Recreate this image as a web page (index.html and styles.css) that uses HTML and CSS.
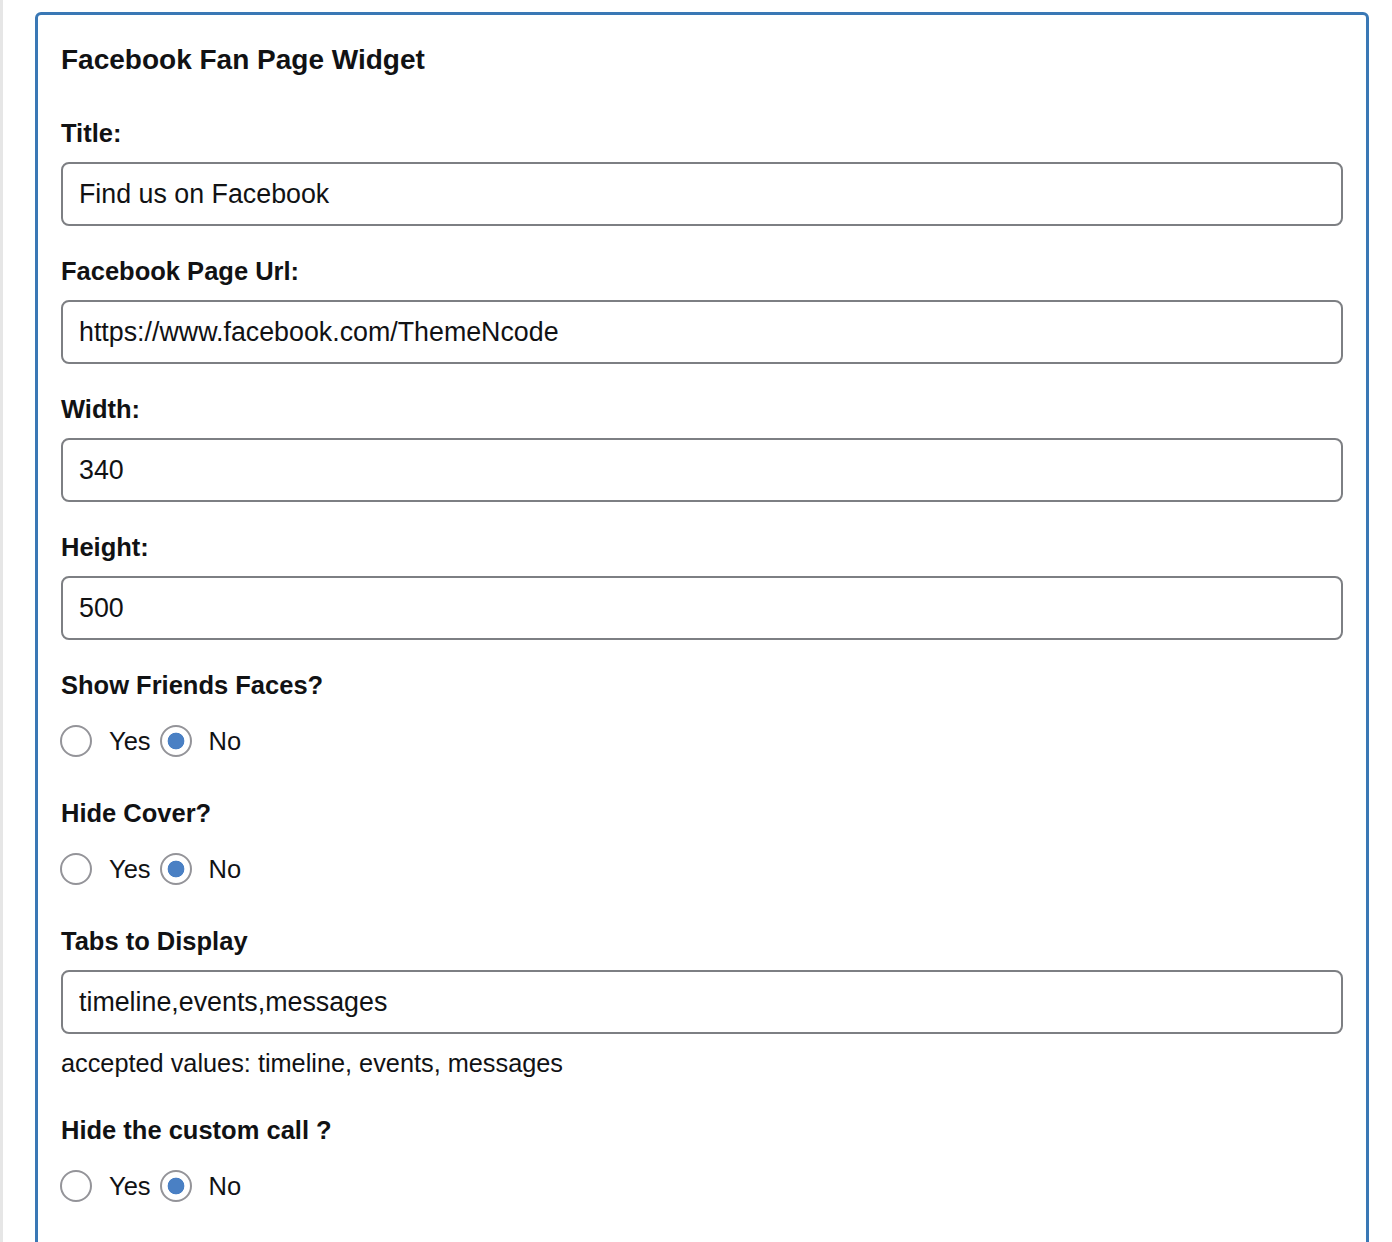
FILE: index.html
```html
<!DOCTYPE html>
<html lang="en">
<head>
<meta charset="utf-8">
<title>Facebook Fan Page Widget</title>
<link rel="stylesheet" href="styles.css">
</head>
<body>
<div class="page">
  <div class="widget">
    <h3 class="widget-title">Facebook Fan Page Widget</h3>

    <div class="field">
      <label class="label" for="f-title">Title:</label>
      <input class="text-input" id="f-title" type="text" value="Find us on Facebook">
    </div>

    <div class="field">
      <label class="label" for="f-url">Facebook Page Url:</label>
      <input class="text-input" id="f-url" type="text" value="https://www.facebook.com/ThemeNcode">
    </div>

    <div class="field">
      <label class="label" for="f-width">Width:</label>
      <input class="text-input" id="f-width" type="text" value="340">
    </div>

    <div class="field">
      <label class="label" for="f-height">Height:</label>
      <input class="text-input" id="f-height" type="text" value="500">
    </div>

    <div class="field field-radios">
      <div class="label">Show Friends Faces?</div>
      <div class="radio-row">
        <input class="radio" type="radio" name="faces" id="faces-yes">
        <label class="radio-label" for="faces-yes">Yes</label>
        <input class="radio" type="radio" name="faces" id="faces-no" checked>
        <label class="radio-label" for="faces-no">No</label>
      </div>
    </div>

    <div class="field field-radios">
      <div class="label">Hide Cover?</div>
      <div class="radio-row">
        <input class="radio" type="radio" name="cover" id="cover-yes">
        <label class="radio-label" for="cover-yes">Yes</label>
        <input class="radio" type="radio" name="cover" id="cover-no" checked>
        <label class="radio-label" for="cover-no">No</label>
      </div>
    </div>

    <div class="field field-desc">
      <label class="label" for="f-tabs">Tabs to Display</label>
      <input class="text-input" id="f-tabs" type="text" value="timeline,events,messages">
      <p class="description">accepted values: timeline, events, messages</p>
    </div>

    <div class="field field-radios">
      <div class="label">Hide the custom call ?</div>
      <div class="radio-row">
        <input class="radio" type="radio" name="cta" id="cta-yes">
        <label class="radio-label" for="cta-yes">Yes</label>
        <input class="radio" type="radio" name="cta" id="cta-no" checked>
        <label class="radio-label" for="cta-no">No</label>
      </div>
    </div>
  </div>
</div>
</body>
</html>
```
FILE: styles.css
```css
html, body {
  margin: 0;
  padding: 0;
  background: #ffffff;
}

body {
  font-family: "Liberation Sans", Arial, sans-serif;
  color: #111214;
  overflow: hidden;
}

.page {
  border-left: 3px solid #e6e6e6;
  height: 1242px;
  padding-top: 12px;
  box-sizing: border-box;
  overflow: hidden;
}

.widget {
  margin-left: 32px;
  width: 1334px;
  box-sizing: border-box;
  border: 3px solid #3a78b5;
  border-radius: 6px;
  padding: 29px 23px 80px 23px;
}

.widget-title {
  margin: 0;
  font-size: 28px;
  line-height: 32px;
  font-weight: 700;
}

.field {
  margin-top: 30px;
}

.widget-title + .field {
  margin-top: 42px;
}

.field-radios {
  padding-bottom: 7px;
}

.field-desc {
  padding-bottom: 7px;
}

.label {
  display: block;
  font-size: 25.5px;
  line-height: 30px;
  font-weight: 700;
  margin-bottom: 14px;
}

.text-input {
  display: block;
  width: 100%;
  box-sizing: border-box;
  height: 64px;
  margin: 0;
  padding: 0 16px;
  border: 2px solid #7d7f83;
  border-radius: 8px;
  background: #fff;
  font-family: "Liberation Sans", Arial, sans-serif;
  font-size: 26.8px;
  color: #111214;
  outline: none;
}

.description {
  margin: 14px 0 0 0;
  font-size: 25.3px;
  line-height: 30px;
}

.radio-row {
  display: flex;
  align-items: center;
  height: 40px;
  margin-top: 21px;
}

.radio {
  appearance: none;
  -webkit-appearance: none;
  width: 32px;
  height: 32px;
  margin: 0 0 0 -1px;
  border: 2px solid #949499;
  border-radius: 50%;
  background: #fff;
  box-sizing: border-box;
  flex: none;
}

.radio:checked {
  background: radial-gradient(circle, #4a80c4 0 8px, #fff 8.7px);
}

.radio-label {
  font-size: 25.5px;
  line-height: 30px;
  margin-left: 17px;
  margin-right: 10px;
}
```
